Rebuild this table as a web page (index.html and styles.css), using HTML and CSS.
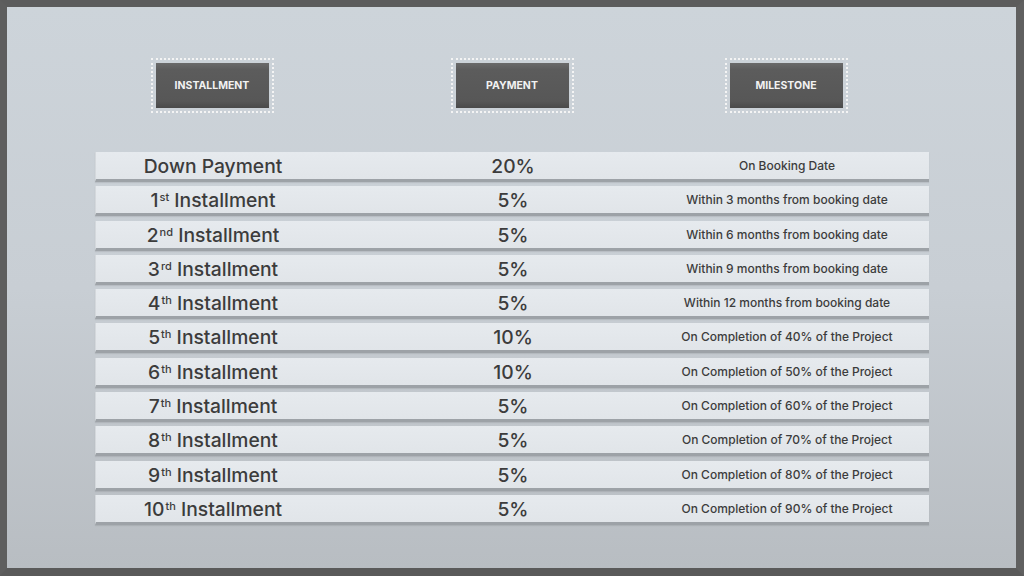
FILE: index.html
```html
<!DOCTYPE html>
<html>
<head>
<meta charset="utf-8">
<link rel="stylesheet" href="styles.css">
</head>
<body>
<div class="frame">
  <div class="heads">
    <div class="cell c1"><div class="btn">Installment</div></div>
    <div class="cell c2"><div class="btn">Payment</div></div>
    <div class="cell c3"><div class="btn">Milestone</div></div>
  </div>
  <div class="table">
    <div class="row"><div class="cell c1 big">Down Payment</div><div class="cell c2 big">20%</div><div class="cell c3 small">On Booking Date</div></div>
    <div class="row"><div class="cell c1 big"><span>1<sup>st</sup> Installment</span></div><div class="cell c2 big">5%</div><div class="cell c3 small">Within 3 months from booking date</div></div>
    <div class="row"><div class="cell c1 big"><span>2<sup>nd</sup> Installment</span></div><div class="cell c2 big">5%</div><div class="cell c3 small">Within 6 months from booking date</div></div>
    <div class="row"><div class="cell c1 big"><span>3<sup>rd</sup> Installment</span></div><div class="cell c2 big">5%</div><div class="cell c3 small">Within 9 months from booking date</div></div>
    <div class="row"><div class="cell c1 big"><span>4<sup>th</sup> Installment</span></div><div class="cell c2 big">5%</div><div class="cell c3 small">Within 12 months from booking date</div></div>
    <div class="row"><div class="cell c1 big"><span>5<sup>th</sup> Installment</span></div><div class="cell c2 big">10%</div><div class="cell c3 small">On Completion of 40% of the Project</div></div>
    <div class="row"><div class="cell c1 big"><span>6<sup>th</sup> Installment</span></div><div class="cell c2 big">10%</div><div class="cell c3 small">On Completion of 50% of the Project</div></div>
    <div class="row"><div class="cell c1 big"><span>7<sup>th</sup> Installment</span></div><div class="cell c2 big">5%</div><div class="cell c3 small">On Completion of 60% of the Project</div></div>
    <div class="row"><div class="cell c1 big"><span>8<sup>th</sup> Installment</span></div><div class="cell c2 big">5%</div><div class="cell c3 small">On Completion of 70% of the Project</div></div>
    <div class="row"><div class="cell c1 big"><span>9<sup>th</sup> Installment</span></div><div class="cell c2 big">5%</div><div class="cell c3 small">On Completion of 80% of the Project</div></div>
    <div class="row"><div class="cell c1 big"><span>10<sup>th</sup> Installment</span></div><div class="cell c2 big">5%</div><div class="cell c3 small">On Completion of 90% of the Project</div></div>
  </div>
</div>
</body>
</html>
```
FILE: styles.css
```css
* { box-sizing: border-box; }
html, body { margin: 0; padding: 0; }
body {
  width: 1024px;
  height: 576px;
  overflow: hidden;
  font-family: Inter, "Noto Sans", sans-serif;
  color: #3b3b3b;
}
.frame {
  width: 1024px;
  height: 576px;
  border-style: solid;
  border-color: #5c5c5c #606060 #5a5a5a #5e5e5e;
  border-width: 7px 8px 8px 7px;
  background: linear-gradient(180deg, #cdd4da 0%, #c8ced4 50%, #b8bdc2 100%);
  padding: 49px 0 0 88px;
}
.heads {
  display: flex;
  width: 834px;
  height: 55px;
}
.cell {
  width: 234px;
  display: flex;
  justify-content: center;
  align-items: center;
  white-space: nowrap;
}
.c2 { margin-left: 66px; }
.c3 { margin-left: 40px; }
.btn {
  width: 113px;
  height: 45px;
  margin-top: 3px;
  background: linear-gradient(180deg, #6a6a6a 0%, #5c5c5c 15%, #575757 85%, #4a4a4a 100%);
  outline: 2px dotted #f4f4f4;
  outline-offset: 3px;
  color: #f2f2f2;
  font-size: 10.5px;
  font-weight: 700;
  text-transform: uppercase;
  display: flex;
  justify-content: center;
  align-items: center;
}
.table {
  margin-top: 41px;
  width: 834px;
  display: flex;
  flex-direction: column;
  gap: 4.3px;
}
.row {
  display: flex;
  height: 30px;
  background: linear-gradient(180deg, #e6eaee 0%, #e1e5e9 100%);
  border-bottom: 3px solid #9da2a7;
  border-left: 1px solid #d4d8dc;
  box-shadow: 0 1px 1px rgba(0,0,0,0.08);
}
.big {
  font-size: 19.3px;
  font-weight: 500;
  color: #3c3c3c;
  padding-top: 1px;
}
.small {
  font-size: 12px;
  font-weight: 500;
  color: #3c3c3c;
}
sup {
  font-size: 11px;
  vertical-align: 6px;
  line-height: 0;
  margin-left: 1px;
}
```
